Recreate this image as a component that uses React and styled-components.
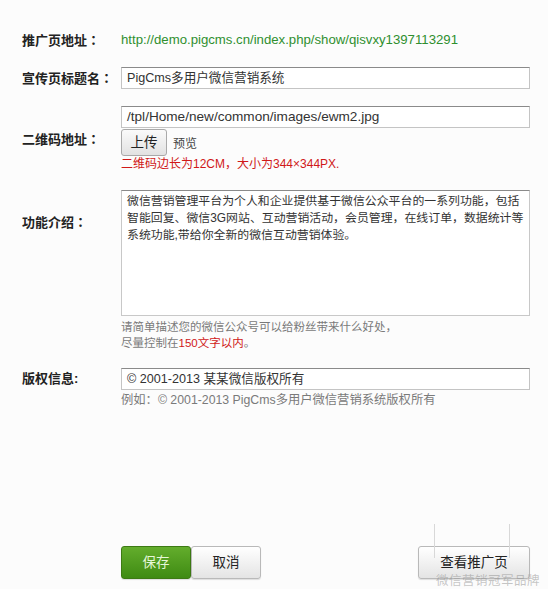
import React from "react";
import styled, { createGlobalStyle } from "styled-components";

const Global = createGlobalStyle`
  html, body {
    margin: 0;
    background: #fcfcfc;
  }
  body {
    font-family: "Liberation Sans", "Noto Sans CJK SC", sans-serif;
    color: #333;
  }
`;

const Page = styled.div`
  width: 548px;
  height: 589px;
  box-sizing: border-box;
  padding: 30px 0 0 22px;
  position: relative;
  overflow: hidden;
`;

const Row = styled.div`
  display: flex;
  align-items: ${(p) => p.$align || "center"};
  margin-bottom: ${(p) => p.$gap || 17}px;
`;

const Label = styled.div`
  width: 99px;
  flex: none;
  font-size: 13px;
  font-weight: bold;
  color: #222;
  line-height: 16px;
  padding-top: ${(p) => p.$top || 0}px;
`;

// centred full-width colon like the original YaHei rendering
const Colon = styled.span`
  font-family: "Noto Sans CJK TC", sans-serif;
`;

const Field = styled.div`
  width: 409px;
  display: flex;
  flex-direction: column;
  align-items: flex-start;
`;

const Link = styled.div`
  color: #2f8f2f;
  font-size: 13.2px;
  line-height: 20px;
  white-space: nowrap;
`;

const Input = styled.div`
  width: 100%;
  height: 22px;
  box-sizing: border-box;
  border: 1px solid #c4c4c4;
  border-top-color: #8a8a8a;
  background: #fff;
  padding: 0 5px;
  font-size: ${(p) => p.$size || 12.6}px;
  line-height: 20px;
  color: #333;
  white-space: nowrap;
`;

const Area = styled.div`
  width: 100%;
  height: 126px;
  box-sizing: border-box;
  border: 1px solid #c8c8c8;
  border-top-color: #8a8a8a;
  background: #fff;
  padding: 2px 2px 2px 5px;
  font-size: 11.9px;
  line-height: 17px;
  color: #333;
`;

const Tools = styled.div`
  display: flex;
  align-items: center;
  margin-top: 1px;
`;

const SmallBtn = styled.div`
  width: 46px;
  height: 27px;
  box-sizing: border-box;
  border: 1px solid #a9a9a9;
  border-radius: 3px;
  background: linear-gradient(#fafafa, #e2e2e2);
  font-size: 13.5px;
  line-height: 25px;
  text-align: center;
  color: #222;
`;

const Preview = styled.span`
  margin-left: 6px;
  font-size: 12px;
  color: #444;
`;

const Note = styled.div`
  font-size: ${(p) => p.$size || 11.5}px;
  line-height: 16px;
  color: ${(p) => p.$color || "#7a7a7a"};
  white-space: nowrap;
  em {
    font-style: normal;
    color: #d01818;
  }
`;

const Actions = styled.div`
  display: flex;
  align-items: center;
  margin-top: 138px;
  padding-left: 99px;
  width: 409px;
`;

const Button = styled.div`
  width: ${(p) => p.$w || 70}px;
  height: 33px;
  box-sizing: border-box;
  border: 1px solid ${(p) => (p.$primary ? "#3d7a14" : "#b9b9b9")};
  border-radius: 3px;
  background: ${(p) =>
    p.$primary
      ? "linear-gradient(#63ad2c, #3f8b13)"
      : "linear-gradient(#ffffff, #e4e4e4)"};
  color: ${(p) => (p.$primary ? "#e6f7d8" : "#222")};
  font-size: 13.5px;
  line-height: 31px;
  text-align: center;
  box-shadow: 0 1px 1px rgba(0, 0, 0, 0.12);
`;

const Spacer = styled.div`
  flex: 1;
`;

const ViewWrap = styled.div`
  position: relative;
`;

const Mark = styled.div`
  position: absolute;
  left: 16px;
  top: -22px;
  width: 74px;
  height: 34px;
  border-left: 1px solid #d8d8d8;
  border-right: 1px solid #d8d8d8;
  pointer-events: none;
`;

const MarkText = styled.div`
  position: absolute;
  left: 18px;
  top: 24px;
  font-size: 12.5px;
  letter-spacing: 0.5px;
  color: rgba(150, 150, 150, 0.55);
  white-space: nowrap;
  pointer-events: none;
`;

export default function App() {
  return (
    <>
      <Global />
      <Page>
        <Row $gap={17}>
          <Label>推广页地址<Colon>：</Colon></Label>
          <Link>http://demo.pigcms.cn/index.php/show/qisvxy1397113291</Link>
        </Row>
        <Row>
          <Label>宣传页标题名<Colon>：</Colon></Label>
          <Field>
            <Input>PigCms多用户微信营销系统</Input>
          </Field>
        </Row>
        <Row $gap={18}>
          <Label>二维码地址<Colon>：</Colon></Label>
          <Field>
            <Input $size={13.6}>/tpl/Home/new/common/images/ewm2.jpg</Input>
            <Tools>
              <SmallBtn>上传</SmallBtn>
              <Preview>预览</Preview>
            </Tools>
            <Note $color="#d01818" $size={12}>二维码边长为12CM，大小为344×344PX.</Note>
          </Field>
        </Row>
        <Row $align="flex-start">
          <Label $top={24}>功能介绍<Colon>：</Colon></Label>
          <Field>
            <Area>
              微信营销管理平台为个人和企业提供基于微信公众平台的一系列功能，包括智能回复、微信3G网站、互动营销活动，会员管理，在线订单，数据统计等系统功能,带给你全新的微信互动营销体验。
            </Area>
            <Note style={{ marginTop: 3 }}>请简单描述您的微信公众号可以给粉丝带来什么好处，</Note>
            <Note>
              尽量控制在<em>150文字以内</em>。
            </Note>
          </Field>
        </Row>
        <Row $align="flex-start">
          <Label $top={3}>版权信息:</Label>
          <Field>
            <Input>© 2001-2013 某某微信版权所有</Input>
            <Note $size={12.3} style={{ marginTop: 2 }}>
              例如：© 2001-2013 PigCms多用户微信营销系统版权所有
            </Note>
          </Field>
        </Row>
        <Actions>
          <Button $primary $w={70}>保存</Button>
          <Button $w={70}>取消</Button>
          <Spacer />
          <ViewWrap>
            <Mark />
            <Button $w={112}>查看推广页</Button>
            <MarkText>微信营销冠军品牌</MarkText>
          </ViewWrap>
        </Actions>
      </Page>
    </>
  );
}
